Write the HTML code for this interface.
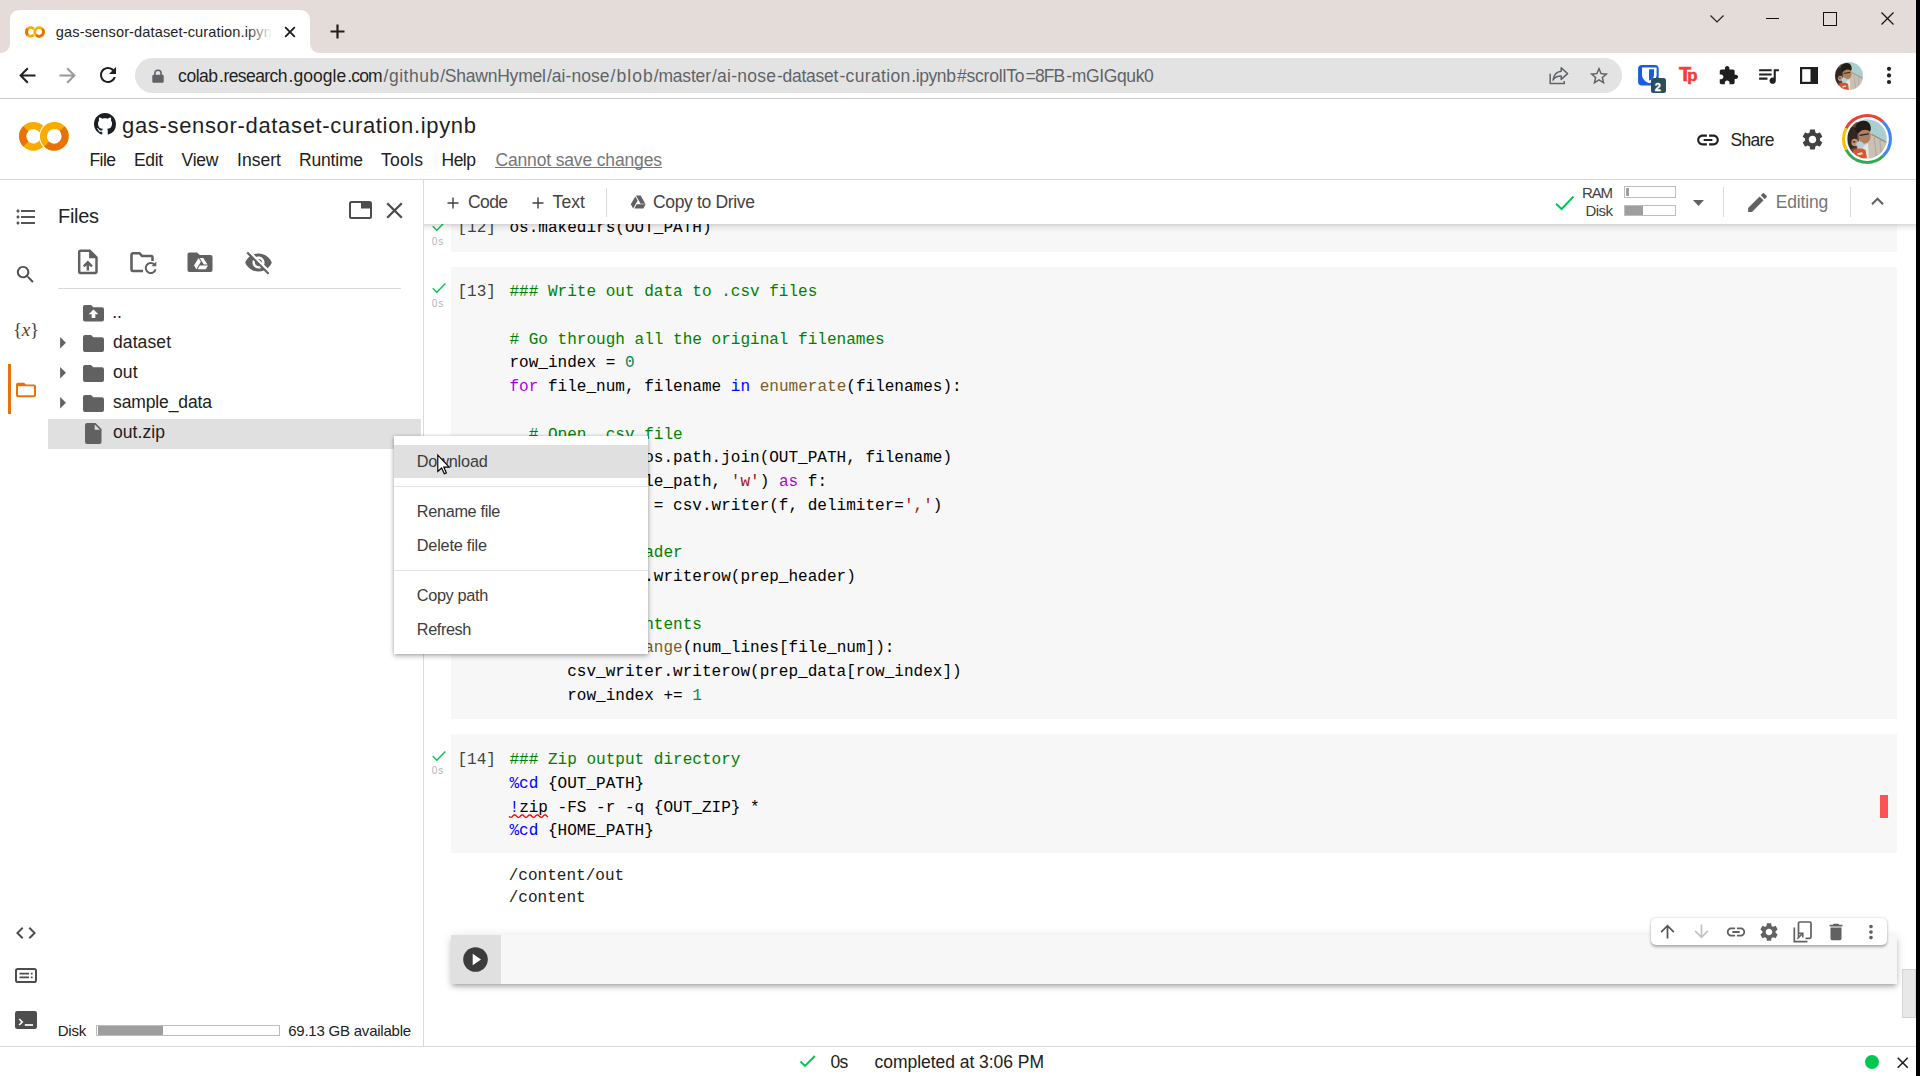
<!DOCTYPE html>
<html lang="en"><head><meta charset="utf-8"><title>gas-sensor-dataset-curation.ipynb - Colaboratory</title>
<style>
html,body{margin:0;padding:0;}
body{width:1920px;height:1076px;overflow:hidden;position:relative;background:#fff;font-family:"Liberation Sans",sans-serif;color:#212121;}
.a{position:absolute;}
.t{position:absolute;white-space:pre;line-height:1;font-family:"Liberation Sans",sans-serif;}
svg{position:absolute;display:block;overflow:visible;}
pre{margin:0;}
.code{position:absolute;font-family:"Liberation Mono",monospace;font-size:16.04px;line-height:24px;height:24px;white-space:pre;color:#000;}
.cm{color:#008000}.kw{color:#af00db}.kb{color:#0000ff}.fn{color:#795e26}.nu{color:#098658}.st{color:#a31515}
.hl{position:absolute;background:#dadada;}
</style></head><body>
<svg width="0" height="0" style="left:-10px;top:-10px"><defs>
<clipPath id="avc"><circle cx="20" cy="20" r="20"/></clipPath>
<filter id="avb" x="-10%" y="-10%" width="120%" height="120%"><feGaussianBlur stdDeviation="0.55"/></filter>
<g id="avatar" clip-path="url(#avc)"><g filter="url(#avb)"><rect x="-3" y="-3" width="46" height="46" fill="#b3d3d3"/>
<rect width="40" height="40" fill="#b3d3d3"/>
<path d="M20 0 H40 V24 L24 15 Z" fill="#a9cfd0"/>
<path d="M0 6 L10 2 L14 12 L10 30 L4 36 L0 30 Z" fill="#5b4a40"/>
<path d="M1 12 C2 8 6 7 9 9 C11 13 10 20 9 28 L3 30 C0 24 0 18 1 12 Z" fill="#332722"/>
<path d="M21 17 L25.500 14.800 L40 23 V40 H21 L18.500 29 Z" fill="#c9c1b5"/>
<path d="M27 18 L30 40 M33 21 L35 40" stroke="#b3aa9d" stroke-width="1.200" fill="none"/>
<path d="M24.500 15.200 L40 23.500" stroke="#8d8a80" stroke-width="1.100"/>
<ellipse cx="17.500" cy="16.500" rx="6.300" ry="8.300" fill="#b07f60"/>
<path d="M8.500 12 C7 5 12 1 17 1.500 C22 1.500 24.500 6 23.800 10.500 C23.500 12.500 22.500 13 21.500 11.500 C19 10 15 10.500 12.500 13 C11.500 14.500 10 15 8.500 12 Z" fill="#231a17"/>
<path d="M12.500 16.300 L21.800 14.800" stroke="#2a1f1b" stroke-width="1.300"/>
<ellipse cx="7.600" cy="23.600" rx="3.400" ry="3.800" fill="#c4916f"/>
<ellipse cx="7" cy="22.800" rx="1.500" ry="0.900" fill="#4a3028"/>
<ellipse cx="12.800" cy="25.500" rx="3.600" ry="3" fill="#b6cfd9"/>
<path d="M16 28 L21 24 L22 40 L18 40 Z" fill="#e9e4dc"/>
<path d="M5.500 32 C8 29 14 29 18.500 31 L20 39.500 L9 40 Z" fill="#d8552d"/>
<path d="M10 34.500 L15 33.500 L16 35.500 L11 36.500 Z" fill="#f4d9cc"/>
</g></g>
<g id="cologo" fill="none">
<path d="M28.75 16.9 A10.8 10.8 0 1 0 28.75 27.7" stroke="#f9ab00" stroke-width="7.1"/>
<path d="M11.76 14.66 A10.8 10.8 0 0 0 11.76 29.94" stroke="#e8710a" stroke-width="7.1"/>
<circle cx="40.4" cy="22.4" r="15.4" fill="#fff"/>
<circle cx="40.4" cy="22.4" r="10.95" stroke="#f9ab00" stroke-width="6.9"/>
<path d="M48.14 14.66 A10.95 10.95 0 0 1 32.66 30.14" stroke="#e8710a" stroke-width="6.9"/>
</g>
</defs></svg>
<!-- ===== Browser chrome ===== -->
<div class="a" style="left:0;top:0;width:1920px;height:53px;background:#e4dcd8"></div>
<div class="a" style="left:0;top:52.5px;width:1920px;height:45.5px;background:#fff"></div>
<div class="a" style="left:0;top:98px;width:1920px;height:1px;background:#c9c9c9"></div>
<!-- active tab -->
<svg style="left:0;top:10px" width="322" height="43" viewBox="0 0 322 43"><path d="M0 43 C6 43 10 39 10 33 L10 10 C10 4 14 0 20 0 L300 0 C306 0 310 4 310 10 L310 33 C310 39 314 43 320 43 Z" fill="#fff"/></svg>
<!-- colab favicon -->
<svg style="left:22.9px;top:22.8px" width="24" height="17.6" viewBox="0 0 60 44"><use href="#cologo"/></svg>
<span class="t" style="left:55.80px;top:25.10px;font-size:14.6px;letter-spacing:0.112px;color:#1f1f1f;">gas-sensor-dataset-curation.ipyn</span>
<div class="a" style="left:246px;top:20px;width:28px;height:24px;background:linear-gradient(90deg,rgba(255,255,255,0),#fff 95%)"></div>
<!-- tab close -->
<svg style="left:284px;top:26px" width="12" height="12" viewBox="0 0 12 12"><path d="M1.2 1.2 L10.8 10.8 M10.8 1.2 L1.2 10.8" stroke="#1f1f1f" stroke-width="1.9" fill="none"/></svg>
<!-- new tab plus -->
<svg style="left:330px;top:24px" width="15" height="15" viewBox="0 0 15 15"><path d="M7.5 0.5 V14.5 M0.5 7.5 H14.5" stroke="#1f1f1f" stroke-width="2.2" fill="none"/></svg>
<!-- window controls -->
<svg style="left:1709px;top:14px" width="16" height="10" viewBox="0 0 16 10"><path d="M1.5 1.5 L8 8 L14.5 1.5" stroke="#222" stroke-width="1.2" fill="none"/></svg>
<div class="a" style="left:1766px;top:18px;width:13px;height:1.3px;background:#111"></div>
<div class="a" style="left:1823px;top:12px;width:11.6px;height:11.6px;border:1.2px solid #111;box-sizing:content-box"></div>
<svg style="left:1881px;top:12px" width="13" height="13" viewBox="0 0 13 13"><path d="M0.5 0.5 L12.5 12.5 M12.5 0.5 L0.5 12.5" stroke="#111" stroke-width="1.2" fill="none"/></svg>
<!-- nav buttons -->
<svg style="left:19px;top:66.5px" width="17" height="17" viewBox="0 0 17 17"><path d="M16.5 8.5 H2 M8.8 1.3 L1.6 8.5 L8.8 15.7" stroke="#1f1f1f" stroke-width="2" fill="none"/></svg>
<svg style="left:59px;top:66.5px" width="17" height="17" viewBox="0 0 17 17"><path d="M0.5 8.5 H15 M8.2 1.3 L15.4 8.5 L8.2 15.7" stroke="#9a9a9a" stroke-width="2" fill="none"/></svg>
<svg style="left:96px;top:63.4px" width="24" height="24" viewBox="0 0 24 24"><path fill="#1f1f1f" d="M17.65 6.35C16.2 4.9 14.21 4 12 4c-4.42 0-7.99 3.58-7.99 8s3.57 8 7.99 8c3.73 0 6.84-2.55 7.73-6h-2.08c-.82 2.33-3.04 4-5.65 4-3.31 0-6-2.69-6-6s2.69-6 6-6c1.66 0 3.14.69 4.22 1.78L13 11h7V4l-2.35 2.35z"/></svg>
<!-- omnibox -->
<div class="a" style="left:135px;top:58px;width:1487px;height:35px;border-radius:18px;background:#e3e3e3"></div>
<svg style="left:152px;top:68.6px" width="12" height="14" viewBox="0 0 12 14"><path fill="none" stroke="#5f6368" stroke-width="1.6" d="M2.900 6.500 V4.300 a3.100 3.100 0 0 1 6.200 0 V6.500"/><rect x="0.300" y="5.700" width="11.400" height="8" rx="1.200" fill="#5f6368"/></svg>
<div class="a" style="left:0;top:0"><span class="t" style="left:178.10px;top:68.10px;font-size:17.5px;letter-spacing:-0.461px;color:#1f1f1f;">colab</span><span class="t" style="left:219.10px;top:68.10px;font-size:17.5px;letter-spacing:-0.569px;color:#1f1f1f;">.research</span><span class="t" style="left:288.50px;top:68.10px;font-size:17.5px;letter-spacing:0.055px;color:#1f1f1f;">.google</span><span class="t" style="left:347.25px;top:68.10px;font-size:17.5px;letter-spacing:-0.862px;color:#1f1f1f;">.com</span><span class="t" style="left:383.60px;top:68.10px;font-size:17.5px;letter-spacing:0.509px;color:#5f6368;">/github</span><span class="t" style="left:440.20px;top:68.10px;font-size:17.5px;letter-spacing:-0.227px;color:#5f6368;">/ShawnHymel</span><span class="t" style="left:546.90px;top:68.10px;font-size:17.5px;letter-spacing:0.048px;color:#5f6368;">/ai-nose</span><span class="t" style="left:610.50px;top:68.10px;font-size:17.5px;letter-spacing:1.074px;color:#5f6368;">/blob</span><span class="t" style="left:653.75px;top:68.10px;font-size:17.5px;letter-spacing:-0.185px;color:#5f6368;">/master</span><span class="t" style="left:712.00px;top:68.10px;font-size:17.5px;letter-spacing:0.233px;color:#5f6368;">/ai-nose</span><span class="t" style="left:776.90px;top:68.10px;font-size:17.5px;letter-spacing:-0.248px;color:#5f6368;">-dataset</span><span class="t" style="left:839.40px;top:68.10px;font-size:17.5px;letter-spacing:0.345px;color:#5f6368;">-curation</span><span class="t" style="left:911.25px;top:68.10px;font-size:17.5px;letter-spacing:-0.411px;color:#5f6368;">.ipynb</span><span class="t" style="left:956.90px;top:68.10px;font-size:17.5px;letter-spacing:-0.170px;color:#5f6368;">#scrollTo</span><span class="t" style="left:1025.60px;top:68.10px;font-size:17.5px;letter-spacing:-0.893px;color:#5f6368;">=8FB</span><span class="t" style="left:1066.25px;top:68.10px;font-size:17.5px;letter-spacing:-0.363px;color:#5f6368;">-mGIGquk0</span></div>
<!-- share + star -->
<svg style="left:1549px;top:66px" width="20" height="19" viewBox="0 0 20 19"><path d="M1.2 7.8 V17.6 H15.2 V15" stroke="#5f6368" stroke-width="1.5" fill="none"/><path d="M12.2 1.8 L18.6 7.6 L12.2 13.4 V10 C8.2 10 5.8 11.2 4 14 C4.6 9.6 7.4 5.8 12.2 5.2 Z" stroke="#5f6368" stroke-width="1.5" fill="none" stroke-linejoin="round"/></svg>
<svg style="left:1587.5px;top:64.5px" width="22" height="22" viewBox="0 0 24 24"><path fill="#5f6368" d="M22 9.24l-7.19-.62L12 2 9.19 8.63 2 9.24l5.46 4.73L5.82 21 12 17.27 18.18 21l-1.63-7.03L22 9.24zM12 15.4l-3.76 2.27 1-4.28-3.32-2.88 4.38-.38L12 6.1l1.71 4.04 4.38.38-3.32 2.88 1 4.28L12 15.4z"/></svg>
<!-- extensions -->
<svg style="left:1638px;top:65.300px" width="21" height="21" viewBox="0 0 21 21"><rect x="0.1" y="0" width="20.600" height="20.600" rx="3.800" fill="#175ddc"/><path d="M4 2.500 H18.600 V10 C18.600 14.500 14 17.300 11.300 18.200 C8.600 17.300 4 14.500 4 10 Z" fill="#fff"/><path d="M11 4.200 H16 V10 C16 12.800 13.500 14.700 11 15.800 Z" fill="#175ddc"/></svg>
<div class="a" style="left:1651px;top:78px;width:15px;height:15px;border-radius:2.5px;background:#294e5f"></div>
<span class="t" style="left:1654.80px;top:82.00px;font-size:11.0px;color:#fff;font-weight:bold;-webkit-text-stroke:0.3px #fff;">2</span>
<div class="a" style="left:0;top:0"><span class="t" style="left:1678.90px;top:63.80px;font-size:20.0px;color:#f93a37;font-weight:bold;-webkit-text-stroke:0.6px #f93a37;">T</span><span class="t" style="left:1687.20px;top:67.60px;font-size:16.8px;color:#f93a37;font-weight:bold;-webkit-text-stroke:0.6px #f93a37;">p</span></div>
<svg style="left:1718px;top:64.5px" width="21" height="21" viewBox="0 0 24 24"><path fill="#1f1f1f" d="M20.5 11H19V7c0-1.1-.9-2-2-2h-4V3.5C13 2.12 11.88 1 10.5 1S8 2.12 8 3.5V5H4c-1.1 0-1.99.9-1.99 2v3.8H3.5c1.49 0 2.7 1.21 2.7 2.7s-1.21 2.7-2.7 2.7H2V20c0 1.1.9 2 2 2h3.8v-1.5c0-1.49 1.21-2.7 2.7-2.7 1.49 0 2.7 1.21 2.7 2.7V22H17c1.1 0 2-.9 2-2v-4h1.5c1.38 0 2.5-1.12 2.5-2.5S21.88 11 20.5 11z"/></svg>
<svg style="left:1755.5px;top:62.5px" width="25" height="25" viewBox="0 0 24 24"><path fill="#1f1f1f" d="M15 6H3v2h12V6zm0 4H3v2h12v-2zM3 16h8v-2H3v2zM17 6v8.18c-.31-.11-.65-.18-1-.18-1.66 0-3 1.34-3 3s1.34 3 3 3 3-1.34 3-3V8h3V6h-5z"/></svg>
<svg style="left:1800px;top:66.7px" width="18" height="17" viewBox="0 0 18 17"><rect x="1.1" y="1.1" width="15.8" height="14.8" fill="#fff" stroke="#1f1f1f" stroke-width="2.2"/><rect x="10.5" y="1" width="6.5" height="15" fill="#1f1f1f"/></svg>
<!-- avatar small -->
<svg style="left:1835px;top:62px" width="28" height="28" viewBox="0 0 40 40"><use href="#avatar"/></svg>
<svg style="left:1886px;top:66px" width="6" height="19" viewBox="0 0 6 19"><circle cx="3" cy="2.8" r="2.1" fill="#1f1f1f"/><circle cx="3" cy="9.4" r="2.1" fill="#1f1f1f"/><circle cx="3" cy="16" r="2.1" fill="#1f1f1f"/></svg>
<!-- ===== Colab header ===== -->
<div class="a" style="left:0;top:179px;width:1916px;height:1px;background:#dadada"></div>
<!-- CO logo -->
<svg style="left:14px;top:114px" width="60" height="44" viewBox="0 0 60 44"><use href="#cologo"/></svg>
<!-- github mark -->
<svg style="left:94px;top:113px" width="22" height="22" viewBox="0 0 16 16"><path fill="#1b1f23" d="M8 0C3.58 0 0 3.58 0 8c0 3.54 2.29 6.53 5.47 7.59.4.07.55-.17.55-.38 0-.19-.01-.82-.01-1.49-2.01.37-2.53-.49-2.69-.94-.09-.23-.48-.94-.82-1.13-.28-.15-.68-.52-.01-.53.63-.01 1.08.58 1.23.82.72 1.21 1.87.87 2.33.66.07-.52.28-.87.51-1.07-1.78-.2-3.64-.89-3.64-3.95 0-.87.31-1.59.82-2.15-.08-.2-.36-1.02.08-2.12 0 0 .67-.21 2.2.82.64-.18 1.32-.27 2-.27.68 0 1.36.09 2 .27 1.53-1.04 2.2-.82 2.2-.82.44 1.1.16 1.92.08 2.12.51.56.82 1.27.82 2.15 0 3.07-1.87 3.75-3.65 3.95.29.25.54.73.54 1.48 0 1.07-.01 1.93-.01 2.2 0 .21.15.46.55.38A8.013 8.013 0 0016 8c0-4.42-3.58-8-8-8z"/></svg>
<span class="t" style="left:122.00px;top:115.10px;font-size:22.0px;letter-spacing:0.668px;color:#1f1f1f;">gas-sensor-dataset-curation.ipynb</span>
<span class="t" style="left:89.50px;top:151.60px;font-size:17.5px;letter-spacing:-0.568px;color:#212121;">File</span>
<span class="t" style="left:134.00px;top:151.60px;font-size:17.5px;letter-spacing:-0.385px;color:#212121;">Edit</span>
<span class="t" style="left:181.50px;top:151.60px;font-size:17.5px;letter-spacing:-0.208px;color:#212121;">View</span>
<span class="t" style="left:237.00px;top:151.60px;font-size:17.5px;letter-spacing:0.044px;color:#212121;">Insert</span>
<span class="t" style="left:299.00px;top:151.60px;font-size:17.5px;letter-spacing:-0.195px;color:#212121;">Runtime</span>
<span class="t" style="left:381.00px;top:151.60px;font-size:17.5px;letter-spacing:0.285px;color:#212121;">Tools</span>
<span class="t" style="left:441.50px;top:151.60px;font-size:17.5px;letter-spacing:-0.500px;color:#212121;">Help</span>
<span class="t" style="left:495.40px;top:151.60px;font-size:17.5px;letter-spacing:-0.150px;color:#777;">Cannot save changes</span>
<div class="a" style="left:495px;top:167px;width:167px;height:1px;background:#777"></div>
<!-- share -->
<svg style="left:1694.5px;top:126.5px" width="26" height="26" viewBox="0 0 24 24"><path fill="#212121" d="M3.9 12c0-1.71 1.39-3.1 3.1-3.1h4V7H7c-2.76 0-5 2.24-5 5s2.24 5 5 5h4v-1.9H7c-1.71 0-3.1-1.39-3.1-3.1zM8 13h8v-2H8v2zm9-6h-4v1.9h4c1.710 0 3.1 1.39 3.1 3.1s-1.39 3.1-3.1 3.1h-4V17h4c2.76 0 5-2.24 5-5s-2.240-5-5-5z"/></svg>
<span class="t" style="left:1730.50px;top:132.10px;font-size:17.5px;letter-spacing:-0.676px;color:#212121;">Share</span>
<svg style="left:1800px;top:127px" width="25" height="25" viewBox="0 0 24 24"><path fill="#424242" d="M19.14 12.94c.04-.3.06-.61.06-.94 0-.32-.02-.64-.07-.94l2.03-1.58c.18-.14.23-.41.12-.61l-1.92-3.32c-.12-.22-.37-.29-.59-.22l-2.39.96c-.5-.38-1.03-.7-1.62-.94l-.36-2.54c-.04-.24-.24-.41-.48-.41h-3.84c-.24 0-.43.17-.47.41l-.36 2.54c-.59.24-1.13.57-1.62.94l-2.39-.96c-.22-.08-.47 0-.59.22L2.74 8.870c-.12.21-.08.47.12.61l2.03 1.58c-.05.3-.09.63-.09.94s.02.64.07.94l-2.030 1.58c-.18.14-.23.41-.12.61l1.920 3.32c.12.22.37.29.59.22l2.39-.96c.5.38 1.030.7 1.62.94l.36 2.54c.05.24.24.41.48.41h3.84c.24 0 .44-.17.47-.41l.36-2.54c.59-.24 1.13-.56 1.62-.94l2.39.96c.22.08.47 0 .59-.22l1.92-3.32c.12-.22.07-.47-.12-.61l-2.010-1.58zM12 15.6c-1.980 0-3.6-1.620-3.6-3.6s1.620-3.6 3.6-3.6 3.600 1.620 3.600 3.600-1.620 3.600-3.600 3.600z"/></svg>
<!-- avatar with google ring -->
<svg style="left:1842px;top:114px" width="50" height="50" viewBox="0 0 50 50"><g fill="none" stroke-width="3.1">
<path d="M4.15 14.38 A23.4 23.4 0 0 1 40.66 7.61" stroke="#ea4335"/>
<path d="M40.66 7.61 A23.4 23.4 0 0 1 40.96 42.11" stroke="#4285f4"/>
<path d="M40.96 42.11 A23.4 23.4 0 0 1 4.15 35.62" stroke="#34a853"/>
<path d="M4.15 35.62 A23.4 23.4 0 0 1 4.15 14.38" stroke="#fbbc05"/></g>
<g transform="translate(5.200,5.200) scale(0.990)"><use href="#avatar"/></g></svg>
<!-- ===== Left rail + Files panel ===== -->
<div class="a" style="left:423px;top:180px;width:1px;height:867px;background:#dadada"></div>
<!-- rail icons -->
<svg style="left:13.75px;top:204.5px" width="24" height="24" viewBox="0 0 24 24"><path fill="#555" d="M4 10.5c-.83 0-1.5.67-1.5 1.5s.67 1.5 1.5 1.5 1.5-.67 1.5-1.5-.67-1.5-1.5-1.5zm0-6c-.83 0-1.5.67-1.5 1.5S3.17 7.5 4 7.5 5.5 6.83 5.5 6 4.830 4.5 4 4.5zm0 12c-.83 0-1.5.68-1.5 1.5s.68 1.5 1.5 1.500 1.500-.68 1.500-1.500-.67-1.500-1.500-1.500zM7 19h14v-2H7v2zm0-6h14v-2H7v2zm0-8v2h14V5H7z"/></svg>
<svg style="left:14px;top:263px" width="23" height="23" viewBox="0 0 24 24"><path fill="#4d4d4d" d="M15.5 14h-.79l-.28-.27C15.41 12.59 16 11.11 16 9.5 16 5.91 13.09 3 9.5 3S3 5.91 3 9.5 5.91 16 9.5 16c1.61 0 3.09-.59 4.23-1.57l.27.28v.79l5 4.99L20.49 19l-4.99-5zm-6 0C7.01 14 5 11.99 5 9.500S7.01 5 9.5 5 14 7.010 14 9.500 11.99 14 9.5 14z"/></svg>
<span class="t" style="left:13px;top:320px;font-size:19px;color:#424242;font-family:'Liberation Serif',serif;letter-spacing:-0.3px">{<i>x</i>}</span>
<div class="a" style="left:8px;top:364px;width:3px;height:50px;background:#e8710a"></div>
<svg style="left:14px;top:378.6px" width="24" height="21.75" viewBox="0 0 24 24" preserveAspectRatio="none"><path fill="#e8710a" d="M20 6h-8l-2-2H4c-1.1 0-1.99.9-1.99 2L2 18c0 1.1.9 2 2 2h16c1.1 0 2-.9 2-2V8c0-1.100-.9-2-2-2zm0 12H4V8h16v10z"/></svg>
<svg style="left:13.500px;top:921px" width="24" height="24" viewBox="0 0 24 24"><path fill="#4d4d4d" d="M9.4 16.6L4.8 12l4.6-4.600L8 6l-6 6 6 6 1.400-1.400zm5.2 0l4.6-4.6-4.600-4.600L16 6l6 6-6 6-1.400-1.400z"/></svg>
<svg style="left:15px;top:968px" width="22" height="15" viewBox="0 0 22 15"><rect x="1" y="1" width="20" height="13" rx="1.8" fill="none" stroke="#4d4d4d" stroke-width="2"/><path d="M4.500 5.600 H14 M4.500 9.400 H14" stroke="#4d4d4d" stroke-width="1.700"/><path d="M15.800 5.600 h1.800 M15.800 9.400 h1.800" stroke="#4d4d4d" stroke-width="1.700"/></svg>
<svg style="left:15px;top:1011px" width="22" height="18" viewBox="0 0 22 18"><rect x="0" y="0" width="22" height="18" rx="2.200" fill="#4d4d4d"/><path d="M4.200 8 L7.200 11 L4.200 14" stroke="#fff" stroke-width="1.700" fill="none"/><path d="M9.800 14 H18" stroke="#fff" stroke-width="1.700"/></svg>
<!-- Files header -->
<span class="t" style="left:58.00px;top:206.10px;font-size:20.0px;letter-spacing:-0.309px;color:#212121;">Files</span>
<svg style="left:349px;top:201px" width="23" height="18" viewBox="0 0 23 18"><rect x="1" y="1" width="21" height="16" rx="1.500" fill="none" stroke="#4d4d4d" stroke-width="2"/><rect x="12" y="1" width="10" height="6.500" fill="#4d4d4d"/></svg>
<svg style="left:386px;top:201.500px" width="17" height="17" viewBox="0 0 17 17"><path d="M1.200 1.200 L15.800 15.800 M15.800 1.200 L1.200 15.800" stroke="#4d4d4d" stroke-width="2.300" fill="none"/></svg>
<!-- Files toolbar -->
<svg style="left:73.25px;top:247px" width="29.7" height="29.7" viewBox="0 0 24 24"><path fill="#616161" d="M14 2H6c-1.100 0-1.990.9-1.990 2L4 20c0 1.100.89 2 1.990 2H18c1.100 0 2-.9 2-2V8l-6-6zm4 18H6V4h7v5h5v11zM8 15.010l1.410 1.410L11 14.840V19h2v-4.160l1.590 1.590L16 15.010 12.010 11 8 15.010z"/></svg>
<svg style="left:130px;top:251px" width="28" height="24" viewBox="0 0 28 24"><path d="M22.500 10 V6.500 a1.500 1.500 0 0 0 -1.500 -1.500 H12 L9.500 2.200 H3 a1.500 1.500 0 0 0 -1.500 1.500 V18.500 a1.500 1.500 0 0 0 1.500 1.500 H13" fill="none" stroke="#616161" stroke-width="2.6"/><path d="M24.300 13.500 A5 5 0 1 0 25.600 18.300" fill="none" stroke="#616161" stroke-width="2"/><path d="M26.300 10.500 V15.300 H21.500 Z" fill="#616161"/></svg>
<svg style="left:187px;top:251.8px" width="26" height="20.4" viewBox="0 0 26 22" preserveAspectRatio="none"><path fill="#616161" d="M2.500 0.500 H10 L12.800 3.300 H23.500 a2 2 0 0 1 2 2 V19.500 a2 2 0 0 1 -2 2 H2.500 a2 2 0 0 1 -2 -2 V2.500 a2 2 0 0 1 2 -2 Z"/><path fill="#fff" d="M11.600 6.500 L7 14.500 L9.300 18.500 L13.900 10.500 Z M10.600 18.500 H18.800 L21 14.600 H12.900 Z M20.400 13.600 L16.300 6.500 H12.700 L16.800 13.600 Z"/></svg>
<svg style="left:243.500px;top:248px" width="29" height="29" viewBox="0 0 24 24"><path fill="#616161" d="M12 7c2.760 0 5 2.240 5 5 0 .65-.13 1.260-.36 1.830l2.920 2.920c1.510-1.260 2.700-2.890 3.430-4.750-1.730-4.390-6-7.500-11-7.500-1.400 0-2.740.25-3.980.7l2.160 2.160C10.740 7.130 11.350 7 12 7zM2 4.270l2.280 2.280.46.46C3.080 8.300 1.780 10.020 1 12c1.730 4.390 6 7.500 11 7.500 1.550 0 3.030-.3 4.380-.84l.42.42L19.730 22 21 20.730 3.270 3 2 4.270zM7.530 9.800l1.550 1.550c-.05.21-.08.430-.08.650 0 1.660 1.340 3 3 3 .22 0 .44-.03.65-.08l1.550 1.550c-.67.33-1.410.53-2.200.53-2.760 0-5-2.240-5-5 0-.79.2-1.530.53-2.200zm4.310-.78l3.150 3.150.02-.16c0-1.660-1.340-3-3-3l-.17.010z"/></svg>
<div class="a" style="left:58px;top:288px;width:343px;height:1px;background:#dadada"></div>
<!-- tree -->
<div class="a" style="left:48px;top:419px;width:373px;height:30px;background:#e0e0e0"></div>
<svg style="left:83px;top:304.900px" width="21" height="16.500" viewBox="0 0 21 16.500"><path fill="#616161" d="M2 0 H8 L10.300 2.300 H19 a2 2 0 0 1 2 2 V14.500 a2 2 0 0 1 -2 2 H2 a2 2 0 0 1 -2 -2 V2 a2 2 0 0 1 2 -2 Z"/><path fill="#fff" d="M10.500 4.500 L15.300 9.300 H12.300 V13 H8.700 V9.300 H5.700 Z"/></svg>
<span class="t" style="left:112.25px;top:304.10px;font-size:17.5px;color:#212121;">..</span>
<svg style="left:60px;top:336.90px" width="6" height="11.6" viewBox="0 0 6 12"><path d="M0 0 L6 6 L0 12 Z" fill="#616161"/></svg>
<svg style="left:83px;top:334.75px" width="21" height="17" viewBox="0 0 21 16.500" preserveAspectRatio="none"><path fill="#616161" d="M2 0 H8 L10.300 2.300 H19 a2 2 0 0 1 2 2 V14.500 a2 2 0 0 1 -2 2 H2 a2 2 0 0 1 -2 -2 V2 a2 2 0 0 1 2 -2 Z"/></svg>
<span class="t" style="left:113.00px;top:334.10px;font-size:17.5px;letter-spacing:0.099px;color:#212121;">dataset</span>
<svg style="left:60px;top:366.90px" width="6" height="11.6" viewBox="0 0 6 12"><path d="M0 0 L6 6 L0 12 Z" fill="#616161"/></svg>
<svg style="left:83px;top:364.75px" width="21" height="17" viewBox="0 0 21 16.500" preserveAspectRatio="none"><path fill="#616161" d="M2 0 H8 L10.300 2.300 H19 a2 2 0 0 1 2 2 V14.500 a2 2 0 0 1 -2 2 H2 a2 2 0 0 1 -2 -2 V2 a2 2 0 0 1 2 -2 Z"/></svg>
<span class="t" style="left:113.00px;top:364.10px;font-size:17.5px;letter-spacing:0.086px;color:#212121;">out</span>
<svg style="left:60px;top:396.90px" width="6" height="11.6" viewBox="0 0 6 12"><path d="M0 0 L6 6 L0 12 Z" fill="#616161"/></svg>
<svg style="left:83px;top:394.75px" width="21" height="17" viewBox="0 0 21 16.500" preserveAspectRatio="none"><path fill="#616161" d="M2 0 H8 L10.300 2.300 H19 a2 2 0 0 1 2 2 V14.500 a2 2 0 0 1 -2 2 H2 a2 2 0 0 1 -2 -2 V2 a2 2 0 0 1 2 -2 Z"/></svg>
<span class="t" style="left:113.00px;top:394.10px;font-size:17.5px;letter-spacing:-0.122px;color:#212121;">sample_data</span>
<svg style="left:85px;top:423px" width="16.500" height="21" viewBox="0 0 16.500 21"><path fill="#616161" d="M2 0 H10.500 L16.500 6 V19 a2 2 0 0 1 -2 2 H2 a2 2 0 0 1 -2 -2 V2 a2 2 0 0 1 2 -2 Z"/><path fill="#e0e0e0" d="M9.700 1.600 V6.800 H14.900 Z"/></svg>
<span class="t" style="left:113.00px;top:424.10px;font-size:17.5px;letter-spacing:0.073px;color:#212121;">out.zip</span>
<!-- disk usage -->
<span class="t" style="left:57.80px;top:1022.60px;font-size:15.0px;letter-spacing:-0.257px;color:#212121;">Disk</span>
<div class="a" style="left:96px;top:1025px;width:184px;height:11px;box-sizing:border-box;border:1px solid #bdbdbd;background:#fff"></div>
<div class="a" style="left:98px;top:1026px;width:65px;height:9px;background:#9e9e9e"></div>
<span class="t" style="left:288.20px;top:1022.60px;font-size:15.0px;letter-spacing:-0.222px;color:#212121;">69.13 GB available</span>
<!-- ===== Notebook area ===== -->
<!-- cell 12 (partially hidden under toolbar) -->
<div class="a" style="left:451px;top:200px;width:1446px;height:52px;background:#f7f7f7"></div>
<div class="code" style="left:457.5px;top:216.10px;color:#424242;">[12]</div>
<div class="code" style="left:509.5px;top:216.10px;">os.makedirs(OUT_PATH)</div>
<svg style="left:431px;top:220px" width="16" height="12" viewBox="0 0 16 12"><path d="M1.800 6.300 L5.800 10.200 L14.300 1.600" fill="none" stroke="#00c752" stroke-width="1.45"/></svg>
<span class="t" style="left:431.75px;top:236.80px;font-size:10.0px;letter-spacing:0.938px;color:#b4b4b4;">0s</span>
<!-- cell 13 -->
<div class="a" style="left:451px;top:267.2px;width:1446px;height:451.5px;background:#f7f7f7"></div>
<svg style="left:431px;top:282px" width="16" height="12" viewBox="0 0 16 12"><path d="M1.800 6.300 L5.800 10.200 L14.300 1.600" fill="none" stroke="#00c752" stroke-width="1.45"/></svg>
<span class="t" style="left:431.75px;top:298.80px;font-size:10.0px;letter-spacing:0.938px;color:#b4b4b4;">0s</span>
<div class="code" style="left:457.5px;top:280.10px;color:#424242;">[13]</div>
<div class="code" style="left:509.5px;top:280.10px;"><span class="cm">### Write out data to .csv files</span></div>
<div class="code" style="left:509.5px;top:328.10px;"><span class="cm"># Go through all the original filenames</span></div>
<div class="code" style="left:509.5px;top:351.10px;">row_index = <span class="nu">0</span></div>
<div class="code" style="left:509.5px;top:375.10px;"><span class="kw">for</span> file_num, filename <span class="kb">in</span> <span class="fn">enumerate</span>(filenames):</div>
<div class="code" style="left:509.5px;top:423.10px;">  <span class="cm"># Open .csv file</span></div>
<div class="code" style="left:509.5px;top:446.10px;">  file_path = os.path.join(OUT_PATH, filename)</div>
<div class="code" style="left:509.5px;top:470.10px;">  <span class="kw">with</span> <span class="fn">open</span>(file_path, <span class="st">'w'</span>) <span class="kw">as</span> f:</div>
<div class="code" style="left:509.5px;top:494.10px;">    csv_writer = csv.writer(f, delimiter=<span class="st">','</span>)</div>
<div class="code" style="left:509.5px;top:541.10px;">    <span class="cm"># Write header</span></div>
<div class="code" style="left:509.5px;top:565.10px;">    csv_writer.writerow(prep_header)</div>
<div class="code" style="left:509.5px;top:613.10px;">    <span class="cm"># Write contents</span></div>
<div class="code" style="left:509.5px;top:636.10px;">    <span class="kw">for</span> _ <span class="kb">in</span> <span class="fn">range</span>(num_lines[file_num]):</div>
<div class="code" style="left:509.5px;top:660.10px;">      csv_writer.writerow(prep_data[row_index])</div>
<div class="code" style="left:509.5px;top:684.10px;">      row_index += <span class="nu">1</span></div>
<!-- cell 14 -->
<div class="a" style="left:451px;top:734.2px;width:1446px;height:118.8px;background:#f7f7f7"></div>
<svg style="left:431px;top:750px" width="16" height="12" viewBox="0 0 16 12"><path d="M1.800 6.300 L5.800 10.200 L14.300 1.600" fill="none" stroke="#00c752" stroke-width="1.45"/></svg>
<span class="t" style="left:431.75px;top:765.80px;font-size:10.0px;letter-spacing:0.938px;color:#b4b4b4;">0s</span>
<div class="code" style="left:457.5px;top:748.10px;color:#424242;">[14]</div>
<div class="code" style="left:509.5px;top:748.10px;"><span class="cm">### Zip output directory</span></div>
<div class="code" style="left:509.5px;top:772.10px;"><span class="kb">%cd</span> {OUT_PATH}</div>
<div class="code" style="left:509.5px;top:796.10px;"><span class="kb">!</span>zip -FS -r -q {OUT_ZIP} *</div>
<div class="code" style="left:509.5px;top:819.10px;"><span class="kb">%cd</span> {HOME_PATH}</div>
<svg style="left:505px;top:810px" width="48" height="10" viewBox="0 0 48 10"><path d="M4.0 6.2 L4.9 7.1 L5.9 7.4 L6.8 7.0 L7.8 6.0 L8.8 5.1 L9.7 4.8 L10.7 5.2 L11.6 6.2 L12.6 7.1 L13.5 7.4 L14.5 7.0 L15.4 6.0 L16.4 5.1 L17.3 4.8 L18.3 5.2 L19.2 6.2 L20.2 7.1 L21.1 7.4 L22.1 7.0 L23.0 6.0 L24.0 5.1 L24.9 4.8 L25.9 5.2 L26.8 6.2 L27.8 7.1 L28.7 7.4 L29.7 7.0 L30.6 6.0 L31.6 5.1 L32.5 4.8 L33.5 5.2 L34.4 6.2 L35.4 7.1 L36.3 7.4 L37.3 7.0 L38.2 6.0 L39.2 5.1 L40.1 4.8 L41.1 5.2 L42.0 6.2 L43.0 7.1" fill="none" stroke="#f00" stroke-width="1.3" stroke-linejoin="round"/></svg>
<div class="a" style="left:1880px;top:794.500px;width:8px;height:23px;background:#ff5252"></div>
<!-- output -->
<div class="code" style="left:508.75px;top:864.10px;color:#212121;">/content/out</div>
<div class="code" style="left:508.75px;top:886.10px;color:#212121;">/content</div>
<!-- focused empty cell -->
<div class="a" style="left:451px;top:935px;width:1446px;height:49px;background:#f7f7f7;box-shadow:0 3.75px 3.75px -2.5px rgba(0,0,0,.2),0 3.75px 5px 0 rgba(0,0,0,.14),0 1.25px 10px 0 rgba(0,0,0,.12)"></div>
<div class="a" style="left:451px;top:935px;width:50px;height:49px;background:#e0e0e0"></div>
<svg style="left:462.9px;top:946.7px" width="25" height="25" viewBox="0 0 25 25"><circle cx="12.500" cy="12.500" r="12.300" fill="#3c3c3c"/><path d="M9.700 6.800 L18 12.500 L9.700 18.200 Z" fill="#fff"/></svg>
<!-- cell toolbar -->
<div class="a" style="left:1651px;top:918px;width:236px;height:26.500px;border-radius:5px;background:#fff;box-shadow:0 1.2px 3px rgba(0,0,0,.3),0 0 2px rgba(0,0,0,.1)"></div>
<svg style="left:1657px;top:921px" width="21" height="21" viewBox="0 0 24 24"><path fill="#555" d="M4 12l1.410 1.410L11 7.830V20h2V7.830l5.580 5.590L20 12l-8-8-8 8z"/></svg>
<svg style="left:1691px;top:921px" width="21" height="21" viewBox="0 0 24 24"><path fill="#c4c4c4" d="M20 12l-1.410-1.410L13 16.170V4h-2v12.170l-5.580-5.590L4 12l8 8 8-8z"/></svg>
<svg style="left:1724.500px;top:920.500px" width="22" height="22" viewBox="0 0 24 24"><path fill="#616161" d="M3.900 12c0-1.710 1.390-3.100 3.100-3.100h4V7H7c-2.760 0-5 2.240-5 5s2.240 5 5 5h4v-1.900H7c-1.710 0-3.100-1.390-3.100-3.100zM8 13h8v-2H8v2zm9-6h-4v1.900h4c1.710 0 3.100 1.390 3.100 3.100s-1.390 3.100-3.100 3.100h-4V17h4c2.760 0 5-2.240 5-5s-2.240-5-5-5z"/></svg>
<svg style="left:1758px;top:920.500px" width="22" height="22" viewBox="0 0 24 24"><path fill="#616161" d="M19.140 12.940c.04-.3.060-.61.060-.94 0-.32-.02-.64-.07-.94l2.030-1.580c.18-.14.23-.41.12-.61l-1.920-3.320c-.12-.22-.37-.29-.59-.22l-2.390.96c-.5-.38-1.030-.7-1.620-.94l-.36-2.540c-.04-.24-.24-.41-.48-.41h-3.840c-.24 0-.43.17-.47.41l-.36 2.540c-.59.24-1.130.57-1.620.94l-2.390-.96c-.22-.08-.47 0-.59.22L2.740 8.870c-.12.21-.08.47.12.61l2.030 1.580c-.05.3-.09.63-.09.94s.02.64.07.94l-2.030 1.580c-.18.14-.23.41-.12.610l1.920 3.320c.12.22.37.29.59.22l2.390-.96c.5.38 1.030.7 1.620.94l.36 2.540c.05.24.24.41.48.41h3.840c.24 0 .44-.17.47-.41l.36-2.540c.59-.24 1.130-.56 1.620-.94l2.390.96c.22.08.47 0 .59-.22l1.920-3.320c.12-.22.07-.47-.12-.61l-2.010-1.580zM12 15.600c-1.980 0-3.600-1.620-3.600-3.600s1.620-3.600 3.600-3.600 3.600 1.620 3.600 3.600-1.620 3.600-3.600 3.600z"/></svg>
<svg style="left:1793px;top:920.500px" width="20" height="22" viewBox="0 0 20 22"><path d="M5.500 16 V2.300 a1.300 1.300 0 0 1 1.300 -1.300 H16.700 a1.300 1.300 0 0 1 1.300 1.300 V16 a1.300 1.300 0 0 1 -1.300 1.300 H12.500" fill="none" stroke="#616161" stroke-width="1.700"/><path d="M1.300 6.500 V20.700 H14.500" fill="none" stroke="#616161" stroke-width="1.700"/><path d="M4.300 17.700 L9.600 12.400 M5.600 12.200 H9.800 V16.400" fill="none" stroke="#616161" stroke-width="1.600"/></svg>
<svg style="left:1825px;top:920.500px" width="22" height="22" viewBox="0 0 24 24"><path fill="#616161" d="M6 19c0 1.100.9 2 2 2h8c1.100 0 2-.9 2-2V7H6v12zM19 4h-3.500l-1-1h-5l-1 1H5v2h14V4z"/></svg>
<svg style="left:1859.500px;top:920.500px" width="22" height="22" viewBox="0 0 24 24"><path fill="#616161" d="M12 8c1.100 0 2-.9 2-2s-.9-2-2-2-2 .9-2 2 .9 2 2 2zm0 2c-1.100 0-2 .9-2 2s.9 2 2 2 2-.9 2-2-.9-2-2-2zm0 6c-1.100 0-2 .9-2 2s.9 2 2 2 2-.9 2-2-.9-2-2-2z"/></svg>
<!-- scrollbar thumb -->
<div class="a" style="left:1902px;top:969px;width:14px;height:48.500px;background:#e8e8e8;border:1px solid #d4d4d4;box-sizing:border-box"></div>
<!-- notebook toolbar (on top of cell 12) -->
<div class="a" style="left:424px;top:224px;width:1492px;height:8px;background:linear-gradient(rgba(0,0,0,.15),rgba(0,0,0,.055) 42%,rgba(0,0,0,0) 100%)"></div>
<div class="a" style="left:424px;top:180px;width:1492px;height:44px;background:#fff"></div>
<svg style="left:447px;top:196.500px" width="12" height="12" viewBox="0 0 12 12"><path d="M6 0.500 V11.500 M0.500 6 H11.500" stroke="#424242" stroke-width="1.400"/></svg>
<span class="t" style="left:468.00px;top:194.10px;font-size:17.5px;letter-spacing:-0.615px;color:#424242;">Code</span>
<svg style="left:531.500px;top:196.500px" width="12" height="12" viewBox="0 0 12 12"><path d="M6 0.500 V11.500 M0.500 6 H11.500" stroke="#424242" stroke-width="1.400"/></svg>
<span class="t" style="left:552.50px;top:194.10px;font-size:17.5px;letter-spacing:0.130px;color:#424242;">Text</span>
<div class="a" style="left:606px;top:187.500px;width:1px;height:29px;background:#dadada"></div>
<svg style="left:629.500px;top:194px" width="16.500" height="16.500" viewBox="0 0 24 24"><path fill="#616161" d="M7.710 3.500L1.150 15l3.430 6 6.550-11.500L7.710 3.500zM9.730 15L6.300 21h13.120l3.430-6H9.730zM22.280 14L15.420 2H8.580l6.860 12h6.840z"/></svg>
<span class="t" style="left:653.00px;top:194.10px;font-size:17.5px;letter-spacing:-0.335px;color:#424242;">Copy to Drive</span>
<!-- RAM / Disk -->
<svg style="left:1554px;top:194px" width="22" height="18" viewBox="0 0 22 18"><path d="M2 9.800 L7.600 15 L19.400 2.600" fill="none" stroke="#00c752" stroke-width="2"/></svg>
<span class="t" style="left:1582.00px;top:185.10px;font-size:15.0px;letter-spacing:-1.172px;color:#424242;">RAM</span>
<span class="t" style="left:1585.50px;top:203.10px;font-size:15.0px;letter-spacing:-0.557px;color:#424242;">Disk</span>
<div class="a" style="left:1624px;top:186px;width:52px;height:12px;box-sizing:border-box;border:1px solid #bdbdbd;background:#fff"></div>
<div class="a" style="left:1626px;top:188px;width:3px;height:8px;background:#9e9e9e"></div>
<div class="a" style="left:1624px;top:205px;width:52px;height:11px;box-sizing:border-box;border:1px solid #bdbdbd;background:#fff"></div>
<div class="a" style="left:1625px;top:206px;width:18px;height:9px;background:#9e9e9e"></div>
<svg style="left:1693px;top:200px" width="11" height="6" viewBox="0 0 11 6"><path d="M0 0 H11 L5.500 6 Z" fill="#616161"/></svg>
<div class="a" style="left:1723px;top:187px;width:1px;height:30px;background:#dadada"></div>
<svg style="left:1744.500px;top:190px" width="25" height="25" viewBox="0 0 24 24"><path fill="#616161" d="M3 17.250V21h3.750L17.810 9.940l-3.750-3.750L3 17.250zM20.710 7.040c.39-.39.390-1.020 0-1.410l-2.340-2.340c-.39-.39-1.020-.39-1.410 0l-1.830 1.830 3.750 3.750 1.830-1.830z"/></svg>
<span class="t" style="left:1775.75px;top:193.85px;font-size:17.5px;letter-spacing:-0.169px;color:#757575;">Editing</span>
<div class="a" style="left:1850px;top:187px;width:1px;height:30px;background:#dadada"></div>
<svg style="left:1864.500px;top:189px" width="25" height="25" viewBox="0 0 24 24"><path fill="#616161" d="M12 8l-6 6 1.410 1.410L12 10.830l4.590 4.580L18 14z"/></svg>
<!-- status bar -->
<div class="a" style="left:0;top:1046px;width:1916px;height:30px;background:#fff"></div>
<div class="a" style="left:0;top:1046px;width:1916px;height:1px;background:#dadada"></div>
<svg style="left:799px;top:1054px" width="18" height="14" viewBox="0 0 18 14"><path d="M1.500 7.500 L6 12 L15.800 2" fill="none" stroke="#00c752" stroke-width="1.900"/></svg>
<span class="t" style="left:830.50px;top:1053.60px;font-size:17.5px;letter-spacing:-0.684px;color:#212121;">0s</span>
<span class="t" style="left:874.50px;top:1053.60px;font-size:17.5px;letter-spacing:-0.039px;color:#212121;">completed at 3:06 PM</span>
<div class="a" style="left:1865px;top:1055px;width:14px;height:14px;border-radius:7px;background:#00c752"></div>
<svg style="left:1896.500px;top:1056.500px" width="11.500" height="11.500" viewBox="0 0 11.500 11.500"><path d="M0.700 0.700 L10.800 10.800 M10.800 0.700 L0.700 10.800" stroke="#212121" stroke-width="1.600" fill="none"/></svg>
<!-- ===== Context menu ===== -->
<div class="a" style="left:394px;top:436px;width:254px;height:217.8px;background:#fff;box-shadow:0 2px 5px rgba(0,0,0,.3),0 0 3px rgba(0,0,0,.14)"></div>
<div class="a" style="left:394px;top:444.8px;width:254px;height:32.9px;background:#e0e0e0"></div>
<span class="t" style="left:416.80px;top:453.30px;font-size:16.25px;letter-spacing:-0.183px;color:#3c3c3c;">Download</span>
<div class="a" style="left:394px;top:486px;width:254px;height:1px;background:#e4e4e4"></div>
<span class="t" style="left:416.80px;top:502.80px;font-size:16.25px;letter-spacing:-0.312px;color:#3c3c3c;">Rename file</span>
<span class="t" style="left:416.80px;top:536.90px;font-size:16.25px;letter-spacing:-0.207px;color:#3c3c3c;">Delete file</span>
<div class="a" style="left:394px;top:570px;width:254px;height:1px;background:#e4e4e4"></div>
<span class="t" style="left:416.80px;top:586.90px;font-size:16.25px;letter-spacing:-0.335px;color:#3c3c3c;">Copy path</span>
<span class="t" style="left:416.80px;top:620.90px;font-size:16.25px;letter-spacing:-0.384px;color:#3c3c3c;">Refresh</span>
<!-- mouse cursor -->
<svg style="left:436.8px;top:453.8px" width="14" height="21" viewBox="-0.8 -0.8 14 21"><path d="M0 0.400 V16.700 L3.800 13.200 L6.500 19 L8.600 18.100 L6 12.300 H11.400 Z" fill="#fff" stroke="#000" stroke-width="1.15" stroke-linejoin="miter"/></svg>
<div class="a" style="left:1916px;top:0;width:4px;height:1076px;background:#000"></div>
</body></html>
